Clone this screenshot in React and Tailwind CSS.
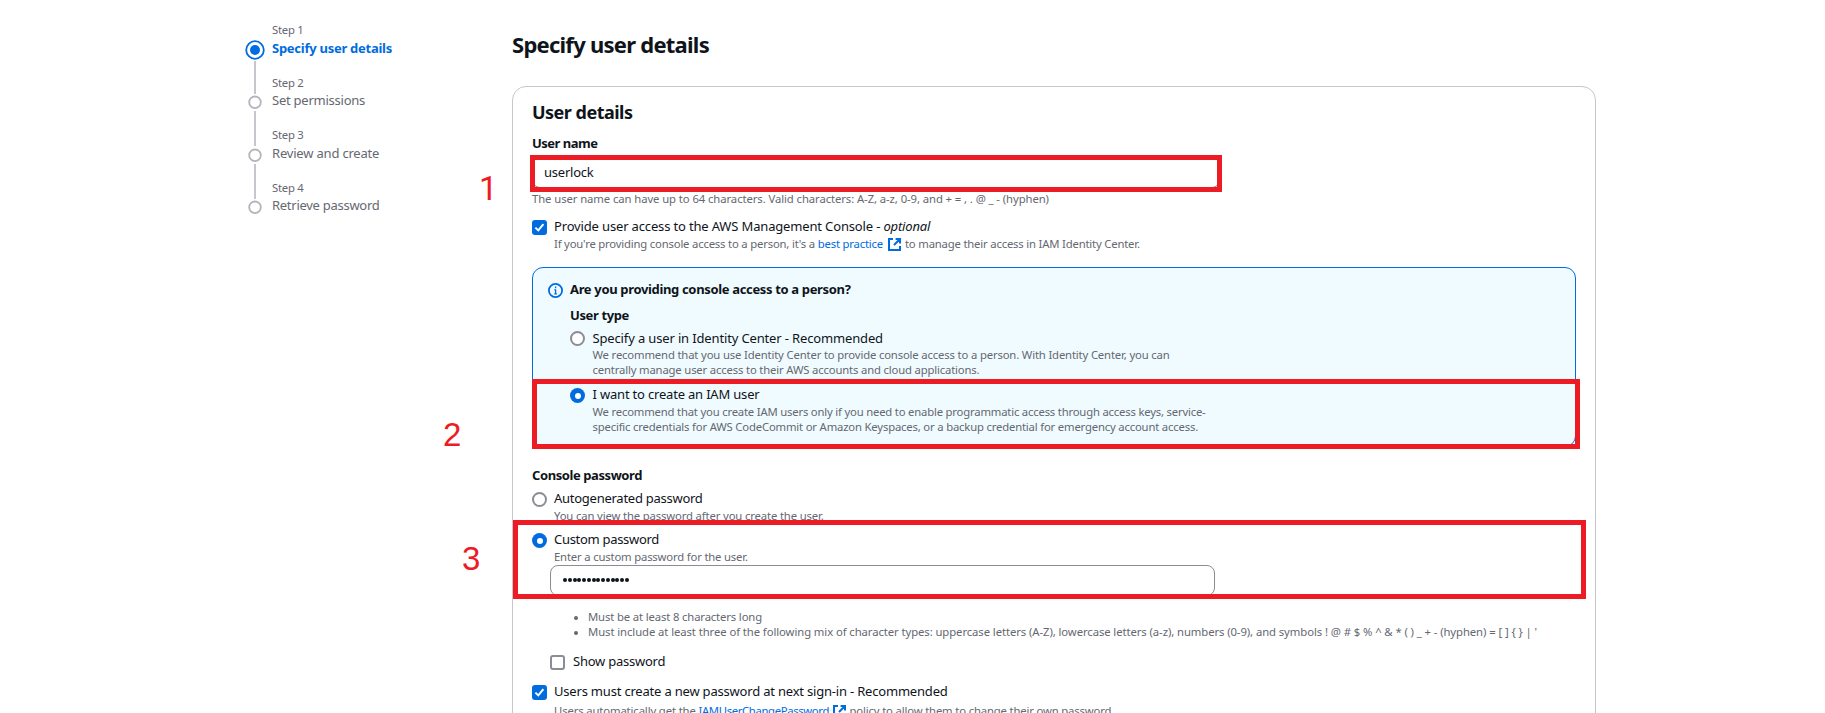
const STEPS = [
  { n: "Step 1", label: "Specify user details", active: true, gap: "mt-0", labelGap: "mt-px", track: "tracking-[-0.26px]" },
  { n: "Step 2", label: "Set permissions", gap: "mt-[17px]", labelGap: "mt-0", track: "tracking-[-0.24px]" },
  { n: "Step 3", label: "Review and create", gap: "mt-[17px]", labelGap: "mt-px", track: "tracking-[-0.19px]" },
  { n: "Step 4", label: "Retrieve password", gap: "mt-[17px]", labelGap: "mt-0", track: "tracking-[-0.274px]" },
];

function Label({ className = "", children }) {
  return <div className={`h-5 whitespace-pre text-[13px] leading-5 ${className}`}>{children}</div>;
}

function Hint({ className = "", children }) {
  return (
    <div className={`flex h-[15px] items-start whitespace-pre text-[11.3px] leading-[15px] text-[#656871] ${className}`}>
      {children}
    </div>
  );
}

function Radio({ checked, className = "mt-1" }) {
  return checked ? (
    <span className={`flex size-[15px] shrink-0 items-center justify-center rounded-full bg-[#006ce0] ${className}`}>
      <span className="size-[6px] rounded-full bg-white" />
    </span>
  ) : (
    <span className={`size-[15px] shrink-0 rounded-full border-2 border-[#8c8c94] bg-white ${className}`} />
  );
}

function Checkbox({ checked }) {
  return checked ? (
    <span className="mt-1 size-[15px] shrink-0 rounded-[3px] bg-[#006ce0]">
      <svg viewBox="0 0 15 15" className="block size-[15px]" fill="none" stroke="#fff" strokeWidth="2">
        <path d="M3.4 7.6 6.3 10.4 11.4 4.2" />
      </svg>
    </span>
  ) : (
    <span className="mt-1 size-[15px] shrink-0 rounded-[3px] border-2 border-[#8c8c94] bg-white" />
  );
}

function External({ className = "" }) {
  return (
    <svg viewBox="0 0 13 13" className={`block size-[13px] shrink-0 ${className}`} fill="none" stroke="#006ce0" strokeWidth="2">
      <path d="M5 1H1v11h11V8M7.6 1H12v4.4M12 1 6 7" />
    </svg>
  );
}

function StepMark({ active }) {
  return active ? (
    <svg viewBox="0 0 20 20" className="block size-5">
      <circle cx="10" cy="10" r="8.8" fill="#fff" stroke="#006ce0" strokeWidth="1.8" />
      <circle cx="10" cy="10" r="5" fill="#006ce0" />
    </svg>
  ) : (
    <svg viewBox="0 0 14 14" className="block size-[14px]">
      <circle cx="7" cy="7.3" r="5.8" fill="#fff" stroke="#b4b4bb" strokeWidth="1.8" />
    </svg>
  );
}

export default function App() {
  return (
    <div className="relative flex h-[713px] w-[1825px] overflow-hidden bg-white font-['Noto_Sans','Open_Sans',sans-serif] text-[#0f141a]">
      <aside className="flex w-[512px] shrink-0 pl-[245px] pt-[22px]">
        <div className="flex w-5 flex-col items-center pt-[18px]">
          <StepMark active />
          <span className="mt-[1px] h-[33px] w-[2px] bg-[#c6c6cd]" />
          <span className="mt-[1px]"><StepMark /></span>
          <span className="mt-[2px] h-[35px] w-[2px] bg-[#c6c6cd]" />
          <span className="mt-[2px]"><StepMark /></span>
          <span className="mt-[2px] h-[35px] w-[2px] bg-[#c6c6cd]" />
          <span className="mt-[1px]"><StepMark /></span>
        </div>
        <div className="pl-[7px]">
          {STEPS.map((s) => (
            <div key={s.n} className={s.gap}>
              <Hint className="tracking-[-0.25px]">{s.n}</Hint>
              <Label className={`${s.labelGap} ${s.track} ${s.active ? "font-bold text-[#006ce0]" : "text-[#656871]"}`}>
                {s.label}
              </Label>
            </div>
          ))}
        </div>
      </aside>

      <main className="w-[1084px] shrink-0 pt-[29px]">
        <h1 className="h-[30px] whitespace-pre text-[22px] font-bold leading-[30px] tracking-[-0.744px]">Specify user details</h1>

        <section className="mt-[27px] h-[700px] rounded-[14px] border border-[#c6c6cd] pl-[19px] pr-[19px] pt-[13px]">
          <h2 className="h-6 text-[18px] font-bold leading-6 tracking-[-0.51px]">User details</h2>
          <Label className="mt-[9px] font-bold tracking-[-0.498px]">User name</Label>
          <div className="mt-1 h-[31px] w-[688px] rounded-[8px] border border-[#8c8c94] bg-white pl-[11px] pt-[4px]">
            <Label className="tracking-[-0.234px]">userlock</Label>
          </div>
          <Hint className="mt-[3px] tracking-[-0.085px]">
            {"The user name can have up to 64 characters. Valid characters: A-Z, a-z, 0-9, and + = , . @ _ - (hyphen)"}
          </Hint>

          <div className="mt-[10px] flex gap-[7px]">
            <Checkbox checked />
            <div>
              <Label className="tracking-[-0.155px]">Provide user access to the AWS Management Console - <i>optional</i></Label>
              <Hint className="tracking-[-0.186px]">
                <span>{"If you're providing console access to a person, it's a "}</span>
                <span className="text-[#006ce0]">best practice</span>
                <External className="ml-[5px] mt-[2px]" />
                <span className="ml-[4px]">to manage their access in IAM Identity Center.</span>
              </Hint>
            </div>
          </div>

          <div className="mt-4 flex h-[180px] rounded-[11px] border border-[#006ce0] bg-[#f0fbff] pl-[15px] pt-[11px]">
            <svg viewBox="0 0 15 15" className="mt-1 block size-[15px] shrink-0" fill="none" stroke="#006ce0">
              <circle cx="7.5" cy="7.5" r="6.6" strokeWidth="1.8" />
              <path d="M7.6 3.5v1.8M7.6 6.3V11.2M6.3 6.9h1.3M6.3 10.8h2.6" strokeWidth="1.3" />
            </svg>
            <div className="ml-[7px]">
              <Label className="font-bold tracking-[-0.342px]">Are you providing console access to a person?</Label>
              <Label className="mt-[6px] font-bold tracking-[-0.373px]">User type</Label>
              <div className="mt-[3px] flex gap-[7.5px]">
                <Radio className="mt-[3px]" />
                <div>
                  <Label className="tracking-[-0.145px]">Specify a user in Identity Center - Recommended</Label>
                  <Hint className="-mt-px tracking-[-0.159px]">
                    We recommend that you use Identity Center to provide console access to a person. With Identity Center, you can
                  </Hint>
                  <Hint className="tracking-[-0.166px]">
                    centrally manage user access to their AWS accounts and cloud applications.
                  </Hint>
                </div>
              </div>
              <div className="mt-[7px] flex gap-[7.5px]">
                <Radio checked />
                <div>
                  <Label className="tracking-[-0.189px]">I want to create an IAM user</Label>
                  <Hint className="tracking-[-0.194px]">
                    We recommend that you create IAM users only if you need to enable programmatic access through access keys, service-
                  </Hint>
                  <Hint className="tracking-[-0.18px]">
                    specific credentials for AWS CodeCommit or Amazon Keyspaces, or a backup credential for emergency account access.
                  </Hint>
                </div>
              </div>
            </div>
          </div>

          <Label className="mt-[18px] font-bold tracking-[-0.417px]">Console password</Label>
          <div className="mt-[3px] flex gap-[7px]">
            <Radio />
            <div>
              <Label className="tracking-[-0.26px]">Autogenerated password</Label>
              <Hint className="tracking-[-0.145px]">You can view the password after you create the user.</Hint>
            </div>
          </div>
          <div className="mt-[6px] flex gap-[7px]">
            <Radio checked />
            <div>
              <Label className="tracking-[-0.3px]">Custom password</Label>
              <Hint className="tracking-[-0.175px]">Enter a custom password for the user.</Hint>
            </div>
          </div>

          <div className="ml-[18px]">
            <div className="mt-px flex h-[31px] w-[665px] items-center gap-[0.75px] rounded-[8px] border border-[#8c8c94] bg-white pb-px pl-[12px]">
              {Array.from({ length: 14 }, (_, i) => (
                <span key={i} className="size-[4px] shrink-0 rounded-full bg-[#0f141a]" />
              ))}
            </div>
            <div className="mt-[13px] pl-[24px]">
              <div className="flex">
                <span className="mt-[7px] size-[4px] rounded-full bg-[#656871]" />
                <Hint className="ml-[10px] tracking-[-0.142px]">Must be at least 8 characters long</Hint>
              </div>
              <div className="flex">
                <span className="mt-[7px] size-[4px] rounded-full bg-[#656871]" />
                <Hint className="ml-[10px] tracking-[-0.082px]">
                  {"Must include at least three of the following mix of character types: uppercase letters (A-Z), lowercase letters (a-z), numbers (0-9), and symbols ! @ # $ % ^ & * ( ) _ + - (hyphen) = [ ] { } | '"}
                </Hint>
              </div>
            </div>
            <div className="mt-3 flex gap-2">
              <Checkbox />
              <Label className="tracking-[-0.24px]">Show password</Label>
            </div>
          </div>

          <div className="mt-[10px] flex gap-[7px]">
            <Checkbox checked />
            <div>
              <Label className="tracking-[-0.195px]">Users must create a new password at next sign-in - Recommended</Label>
              <Hint className="mt-[2px] tracking-[-0.16px]">
                <span className="tracking-[-0.131px]">{"Users automatically get the "}</span>
                <span className="tracking-[-0.35px] text-[#006ce0]">IAMUserChangePassword</span>
                <External className="ml-[3.5px] mt-[2px]" />
                <span className="ml-[4px]">policy to allow them to change their own password.</span>
              </Hint>
            </div>
          </div>
        </section>
      </main>

      {/* Callout frames and numbers laid over the form */}
      <div className="absolute left-[530px] top-[155px] h-[37px] w-[692px] border-[5px] border-[#ed1c24]" />
      <div className="absolute left-[532px] top-[379px] h-[70px] w-[1048px] border-[5px] border-[#ed1c24]" />
      <div className="absolute left-[513px] top-[520px] h-[79px] w-[1073px] border-[5px] border-[#ed1c24]" />
      <div className="absolute left-[479px] top-[170px] font-['Roboto',sans-serif] text-[33px] leading-[37px] text-[#ed1c24]">1</div>
      <div className="absolute left-[443px] top-[416px] font-['Liberation_Sans',sans-serif] text-[33px] leading-[37px] text-[#ed1c24]">2</div>
      <div className="absolute left-[462px] top-[540px] font-['Liberation_Sans',sans-serif] text-[33px] leading-[37px] text-[#ed1c24]">3</div>
    </div>
  );
}
